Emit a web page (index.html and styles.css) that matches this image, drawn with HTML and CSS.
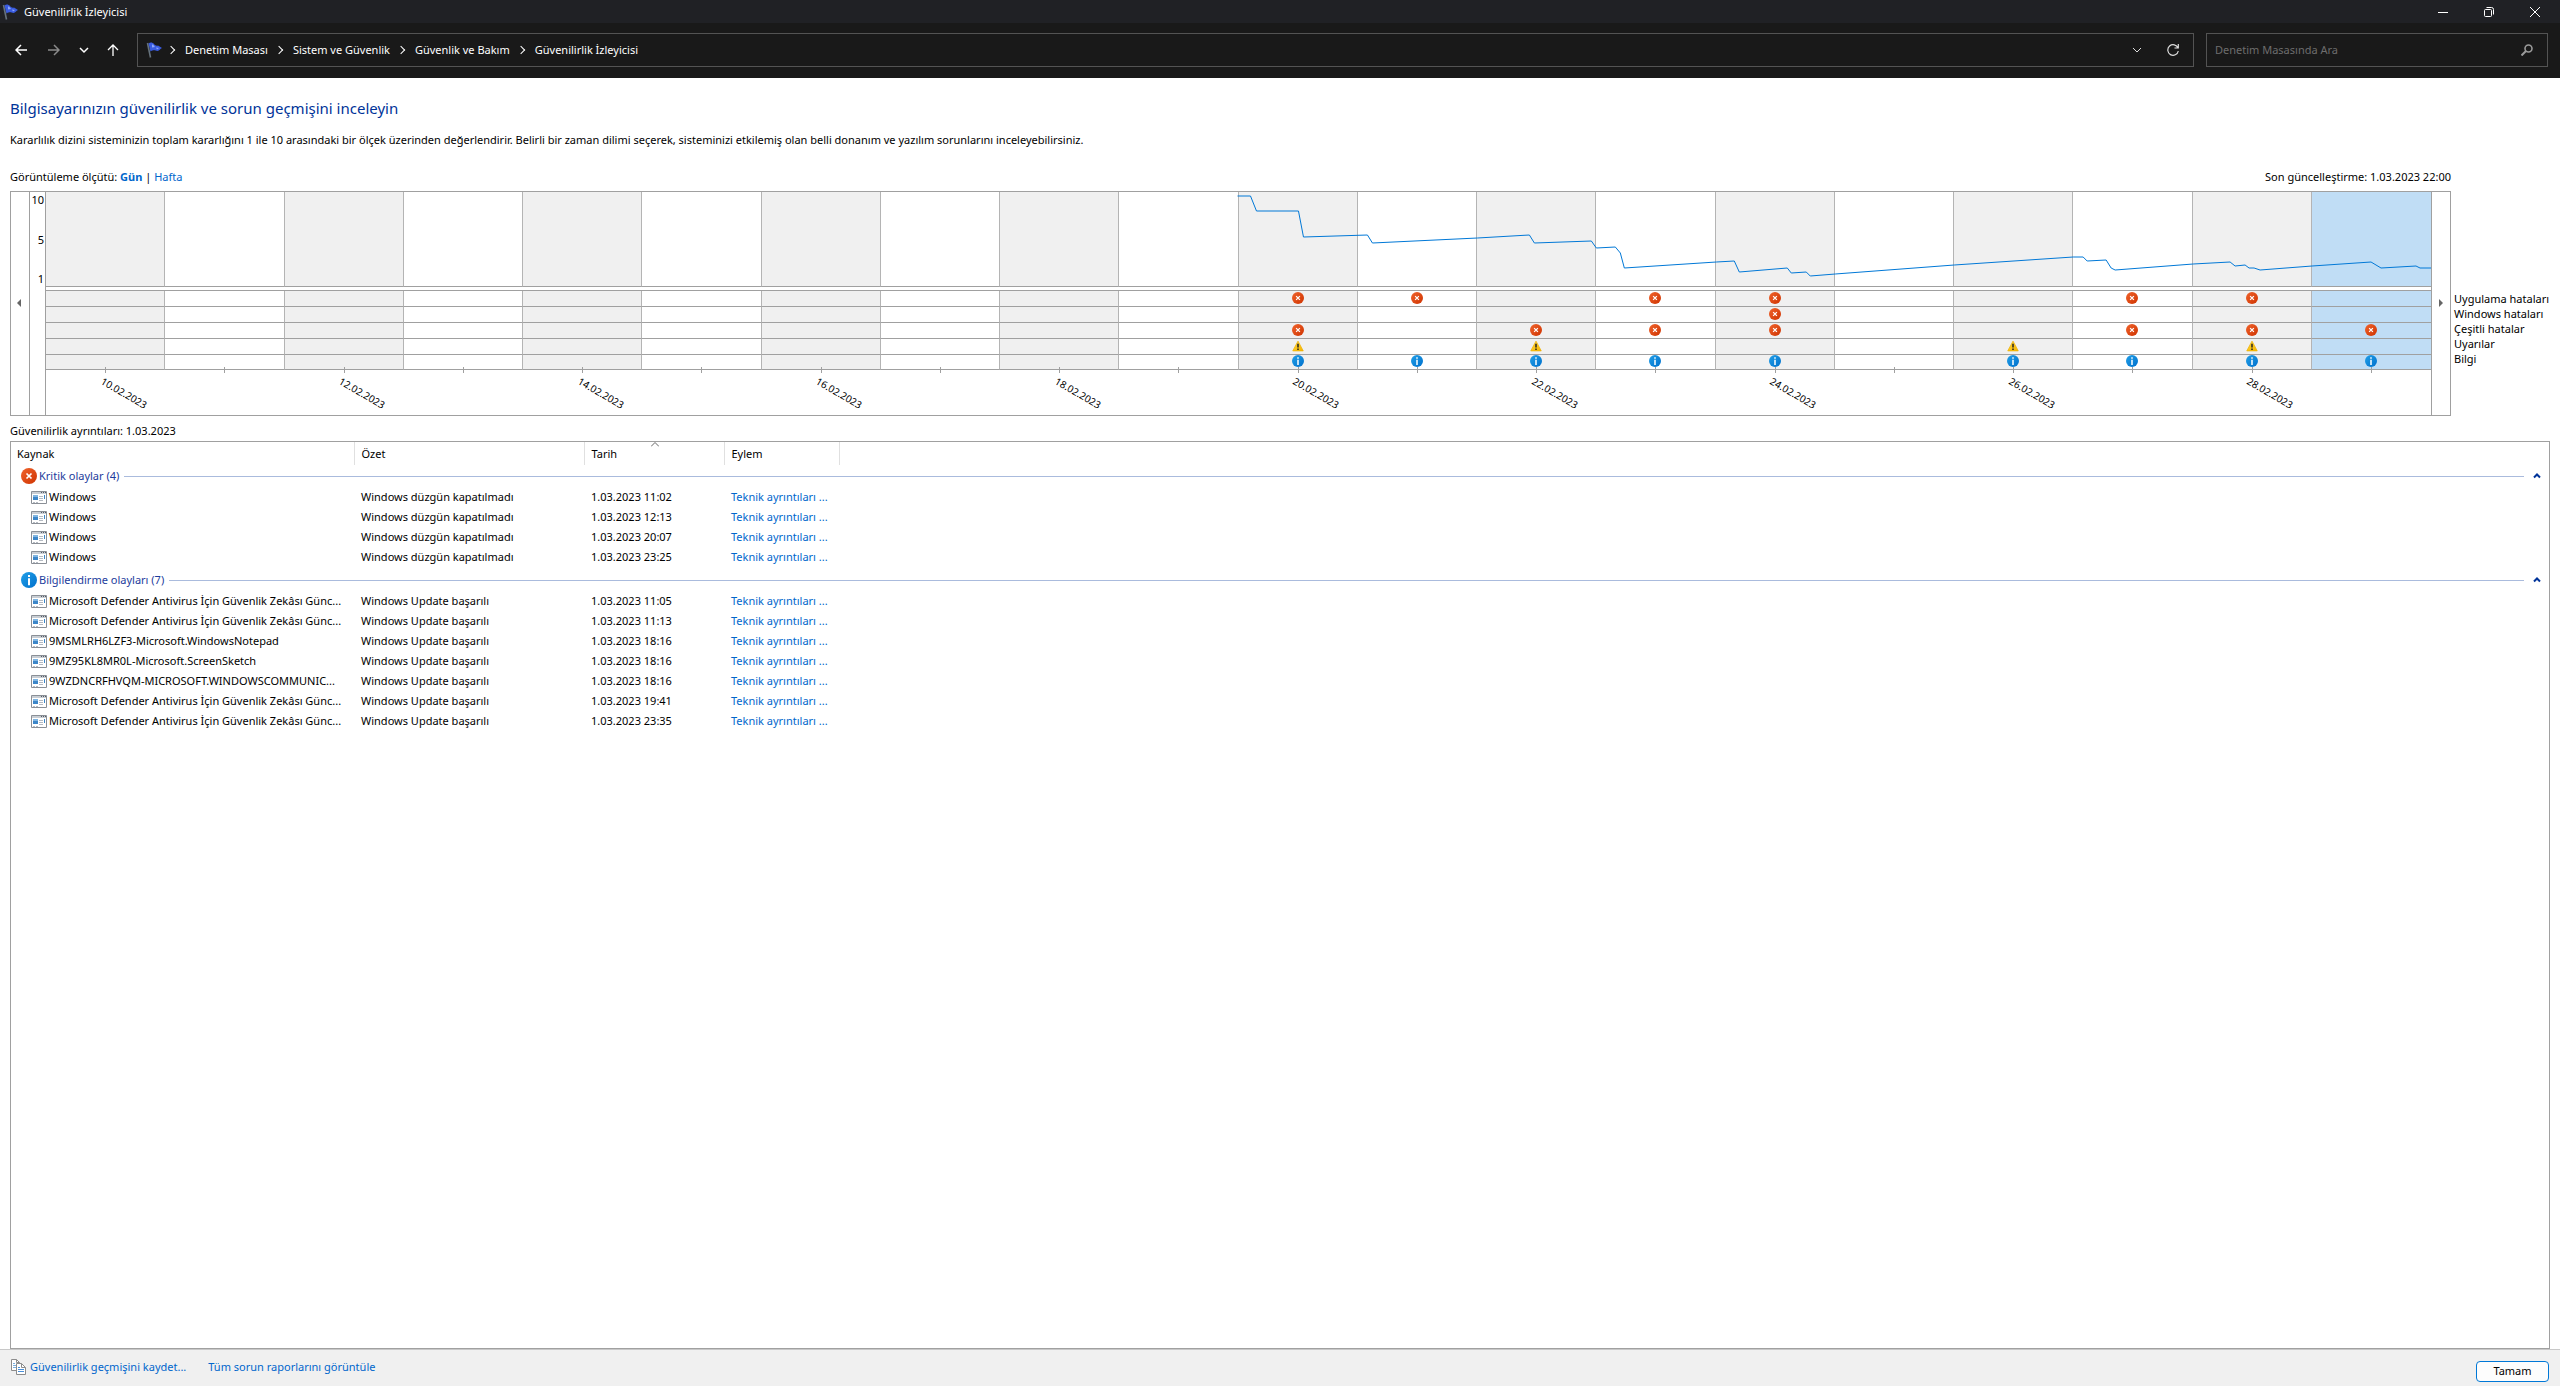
FILE: index.html
```html
<!DOCTYPE html>
<html lang="tr">
<head>
    <meta charset="UTF-8">
    <meta name="viewport" content="width=device-width, initial-scale=1.0">
    <title>Güvenilirlik İzleyicisi</title>
    <link rel="stylesheet" href="styles.css">
</head>
<body>
    <!-- Shared icons -->
    <svg class="sprite" width="0" height="0">
        <defs>
            <linearGradient id="red" x1="0" y1="0" x2="1" y2="1">
                <stop offset="0" stop-color="#f0642d"/>
                <stop offset="1" stop-color="#cf3300"/>
            </linearGradient>
            <linearGradient id="blue" x1="0" y1="0" x2="1" y2="1">
                <stop offset="0" stop-color="#22a0e8"/>
                <stop offset="1" stop-color="#0070cc"/>
            </linearGradient>
            <linearGradient id="yellow" x1="0" y1="0" x2="1" y2="1">
                <stop offset="0" stop-color="#ffd83a"/>
                <stop offset="1" stop-color="#f5b400"/>
            </linearGradient>
        </defs>
        <symbol id="error" viewBox="0 0 16 16">
            <circle cx="8" cy="8" r="8" fill="url(#red)"/>
            <path d="M5.500 5.500l5 5M10.500 5.500l-5 5" stroke="#fff" stroke-width="1.700"/>
        </symbol>
        <symbol id="info" viewBox="0 0 16 16">
            <circle cx="8" cy="8" r="8" fill="url(#blue)"/>
            <path d="M8 3v2M8 6.300v7" stroke="#fff" stroke-width="2"/>
        </symbol>
        <symbol id="warning" viewBox="0 0 16 16">
            <path d="M8 1.500L15 14.500H1z" fill="url(#yellow)" stroke="#efb000" stroke-linejoin="round"/>
            <path d="M8 5v5M8 11.300v2" stroke="#222" stroke-width="2"/>
        </symbol>
        <symbol id="flag" viewBox="0 0 16 16">
            <path d="M1.500 1l3 14.500" stroke="#66727c" stroke-width="1.600"/>
            <path d="M2.500 1.500c2-1.500 4-1 5.500.5 1 1.500 2.500 2 4 1.500l4 2.500c-2 .5-2.500 3-4.500 3-2.500 0-3-1.800-7 .5z" fill="#3a5ce0"/>
            <path d="M6 2.500c1.500-.5 2 1.500 3 2.500l-3 .5zM10 5.500l3 .5-2 1.500z" fill="#8ea6f8"/>
        </symbol>
        <symbol id="program" viewBox="0 0 16 13">
            <path d="M.5.500h15v12H.5z" fill="#fff" stroke="#8a8f96"/>
            <path d="M1 1h14v2H1z" fill="#c9ced4"/>
            <path d="M10 1.500h1M12 1.500h1M14 1.500h1" stroke="#555b63"/>
            <path d="M2 4h5v5H2z" fill="#3c86c8"/>
            <path d="M2 4h5v2H2z" fill="#7fb4e0"/>
            <path d="M8 5.500h4M8 7.500h4M8 9.500h4M2 11.500h2M5 11.500h2" stroke="#b4bac2"/>
            <path d="M13.500 4v4" stroke="#3c86c8"/>
        </symbol>
        <symbol id="up" viewBox="0 0 8 6">
            <path d="M1 4.500l3-3 3 3" fill="none" stroke="#003399" stroke-width="2"/>
        </symbol>
    </svg>

    <header class="titlebar">
        <svg class="icon" width="16" height="16"><use href="#flag"/></svg>
        <span class="title">Güvenilirlik İzleyicisi</span>
        <div class="window-buttons">
            <button type="button"><svg width="10" height="10"><path d="M0 5.500h10" stroke="#fff"/></svg></button>
            <button type="button"><svg width="10" height="10" fill="none" stroke="#fff"><rect x=".5" y="2.500" width="7" height="7" rx="1"/><path d="M2.500.5h5a2 2 0 0 1 2 2v5"/></svg></button>
            <button type="button"><svg width="10" height="10"><path d="M0 0l10 10M10 0L0 10" stroke="#fff"/></svg></button>
        </div>
    </header>

    <nav class="navbar">
        <div class="nav-buttons">
            <button type="button"><svg width="12" height="12"><path d="M12 6H1M6 1L1 6l5 5" stroke="#fff" stroke-width="1.500" fill="none"/></svg></button>
            <button type="button" disabled><svg width="12" height="12"><path d="M0 6h11M6 1l5 5-5 5" stroke="#8a8a8a" stroke-width="1.500" fill="none"/></svg></button>
            <button type="button"><svg width="12" height="12"><path d="M2 4l4 4 4-4" stroke="#fff" stroke-width="1.500" fill="none"/></svg></button>
            <button type="button"><svg width="12" height="12"><path d="M6 12V1M1 6l5-5 5 5" stroke="#fff" stroke-width="1.300" fill="none"/></svg></button>
        </div>
        <div class="address">
            <svg class="icon" width="16" height="16"><use href="#flag"/></svg>
            <ol class="breadcrumb">
                <li><a href="#">Denetim Masası</a></li>
                <li><a href="#">Sistem ve Güvenlik</a></li>
                <li><a href="#">Güvenlik ve Bakım</a></li>
                <li><a href="#">Güvenilirlik İzleyicisi</a></li>
            </ol>
            <button type="button"><svg width="12" height="12"><path d="M2 4l4 4 4-4" stroke="#ddd" fill="none"/></svg></button>
            <button type="button"><svg width="12" height="12" fill="none" stroke="#ddd" stroke-width="1.200"><path d="M11 4a5.300 5.300 0 1 0 .3 3M11.300 0v4H7.500"/></svg></button>
        </div>
        <div class="search">
            <input type="search" placeholder="Denetim Masasında Ara" aria-label="Denetim Masasında Ara">
            <svg width="12" height="12" fill="none" stroke="#9a9a9a"><circle cx="7.500" cy="4.500" r="3.500" stroke-width="1.600"/><path d="M5 7L.5 11.500" stroke-width="2"/></svg>
        </div>
    </nav>

    <main>
        <h1>Bilgisayarınızın güvenilirlik ve sorun geçmişini inceleyin</h1>
        <p class="intro">Kararlılık dizini sisteminizin toplam kararlığını 1 ile 10 arasındaki bir ölçek üzerinden değerlendirir. Belirli bir zaman dilimi seçerek, sisteminizi etkilemiş olan belli donanım ve yazılım sorunlarını inceleyebilirsiniz.</p>

        <div class="chart-head">
            <p>Görüntüleme ölçütü: <a href="#" class="current">Gün</a> | <a href="#">Hafta</a></p>
            <p>Son güncelleştirme: 1.03.2023 22:00</p>
        </div>

        <section class="chart-area">
            <div class="chart">
                <button type="button" class="scroll"><svg width="4" height="8"><path d="M4 0v8L0 4z" fill="#666"/></svg></button>
                <div class="axis"><span>10</span><span>5</span><span>1</span></div>
                <div class="plot">
                    <div class="days" id="days"></div>
                    <svg class="line" viewBox="0 0 2386 94" preserveAspectRatio="none">
                        <polyline vector-effect="non-scaling-stroke" fill="none" stroke="#0078d7" points="1192,4 1205,4 1211,19 1253,19 1258,45 1322,43 1327,51 1432,46 1484,43 1489,51 1546,49 1551,56 1570,55 1575,61 1579,76 1671,70 1689,69 1694,80 1742,76 1746,81 1761,80 1765,84 1790,82 1909,73 2028,65 2038,65 2042,69 2061,68 2066,76 2070,78 2148,72 2185,70 2190,74 2200,73 2204,76 2209,76 2215,78 2267,74 2326,70 2336,76 2371,74 2375,76 2386,76"/>
                    </svg>
                </div>
                <button type="button" class="scroll right"><svg width="4" height="8"><path d="M0 0v8l4-4z" fill="#666"/></svg></button>
            </div>
            <ul class="legend">
                <li>Uygulama hataları</li>
                <li>Windows hataları</li>
                <li>Çeşitli hatalar</li>
                <li>Uyarılar</li>
                <li>Bilgi</li>
            </ul>
        </section>

        <p class="details-label">Güvenilirlik ayrıntıları: 1.03.2023</p>

        <div class="details">
            <table>
                <colgroup>
                    <col class="col-source">
                    <col class="col-summary">
                    <col class="col-date">
                    <col class="col-action">
                    <col>
                </colgroup>
                <thead>
                    <tr>
                        <th>Kaynak</th>
                        <th>Özet</th>
                        <th class="sorted">Tarih<svg width="8" height="5"><path d="M0 4.500l4-4 4 4" fill="none" stroke="#666"/></svg></th>
                        <th>Eylem</th>
                        <th></th>
                    </tr>
                </thead>
                <tbody>
                    <tr class="group">
                        <th colspan="5"><div><svg class="icon" width="16" height="16"><use href="#error"/></svg><span>Kritik olaylar (4)</span><button type="button"><svg width="8" height="6"><use href="#up"/></svg></button></div></th>
                    </tr>
                    <tr>
                        <td><svg width="16" height="13"><use href="#program"/></svg>Windows</td>
                        <td>Windows düzgün kapatılmadı</td>
                        <td>1.03.2023 11:02</td>
                        <td><a href="#">Teknik ayrıntıları ...</a></td>
                        <td></td>
                    </tr>
                    <tr>
                        <td><svg width="16" height="13"><use href="#program"/></svg>Windows</td>
                        <td>Windows düzgün kapatılmadı</td>
                        <td>1.03.2023 12:13</td>
                        <td><a href="#">Teknik ayrıntıları ...</a></td>
                        <td></td>
                    </tr>
                    <tr>
                        <td><svg width="16" height="13"><use href="#program"/></svg>Windows</td>
                        <td>Windows düzgün kapatılmadı</td>
                        <td>1.03.2023 20:07</td>
                        <td><a href="#">Teknik ayrıntıları ...</a></td>
                        <td></td>
                    </tr>
                    <tr>
                        <td><svg width="16" height="13"><use href="#program"/></svg>Windows</td>
                        <td>Windows düzgün kapatılmadı</td>
                        <td>1.03.2023 23:25</td>
                        <td><a href="#">Teknik ayrıntıları ...</a></td>
                        <td></td>
                    </tr>
                </tbody>
                <tbody>
                    <tr class="group">
                        <th colspan="5"><div><svg class="icon" width="16" height="16"><use href="#info"/></svg><span>Bilgilendirme olayları (7)</span><button type="button"><svg width="8" height="6"><use href="#up"/></svg></button></div></th>
                    </tr>
                    <tr>
                        <td><svg width="16" height="13"><use href="#program"/></svg>Microsoft Defender Antivirus İçin Güvenlik Zekâsı Günc...</td>
                        <td>Windows Update başarılı</td>
                        <td>1.03.2023 11:05</td>
                        <td><a href="#">Teknik ayrıntıları ...</a></td>
                        <td></td>
                    </tr>
                    <tr>
                        <td><svg width="16" height="13"><use href="#program"/></svg>Microsoft Defender Antivirus İçin Güvenlik Zekâsı Günc...</td>
                        <td>Windows Update başarılı</td>
                        <td>1.03.2023 11:13</td>
                        <td><a href="#">Teknik ayrıntıları ...</a></td>
                        <td></td>
                    </tr>
                    <tr>
                        <td><svg width="16" height="13"><use href="#program"/></svg>9MSMLRH6LZF3-Microsoft.WindowsNotepad</td>
                        <td>Windows Update başarılı</td>
                        <td>1.03.2023 18:16</td>
                        <td><a href="#">Teknik ayrıntıları ...</a></td>
                        <td></td>
                    </tr>
                    <tr>
                        <td><svg width="16" height="13"><use href="#program"/></svg>9MZ95KL8MR0L-Microsoft.ScreenSketch</td>
                        <td>Windows Update başarılı</td>
                        <td>1.03.2023 18:16</td>
                        <td><a href="#">Teknik ayrıntıları ...</a></td>
                        <td></td>
                    </tr>
                    <tr>
                        <td><svg width="16" height="13"><use href="#program"/></svg>9WZDNCRFHVQM-MICROSOFT.WINDOWSCOMMUNIC...</td>
                        <td>Windows Update başarılı</td>
                        <td>1.03.2023 18:16</td>
                        <td><a href="#">Teknik ayrıntıları ...</a></td>
                        <td></td>
                    </tr>
                    <tr>
                        <td><svg width="16" height="13"><use href="#program"/></svg>Microsoft Defender Antivirus İçin Güvenlik Zekâsı Günc...</td>
                        <td>Windows Update başarılı</td>
                        <td>1.03.2023 19:41</td>
                        <td><a href="#">Teknik ayrıntıları ...</a></td>
                        <td></td>
                    </tr>
                    <tr>
                        <td><svg width="16" height="13"><use href="#program"/></svg>Microsoft Defender Antivirus İçin Güvenlik Zekâsı Günc...</td>
                        <td>Windows Update başarılı</td>
                        <td>1.03.2023 23:35</td>
                        <td><a href="#">Teknik ayrıntıları ...</a></td>
                        <td></td>
                    </tr>
                </tbody>
            </table>
        </div>
    </main>

    <footer>
        <svg width="15" height="16" fill="#fff" stroke="#8c8c8c"><path d="M.5.500h5l3 3v8h-8z"/><path d="M5.500.5v3h3" fill="none"/><path d="M2 4.500h2M2 6.500h3M2 8.500h3" stroke="#7ab0e0"/><path d="M5.500 4.500h5l4 4v7h-9z"/><path d="M10.500 4.500v4h4" fill="none"/><path d="M7 8.500h2M7 10.500h6M7 12.500h6" stroke="#4a90d9"/></svg>
        <a href="#">Güvenilirlik geçmişini kaydet...</a>
        <a href="#">Tüm sorun raporlarını görüntüle</a>
        <button type="button" class="ok">Tamam</button>
    </footer>

    <script src="script.js"></script>
</body>
</html>
```
FILE: styles.css
```css
* {
    box-sizing: border-box;
}
body {
    margin: 0;
    min-height: 100vh;
    display: flex;
    flex-direction: column;
    background: #fff;
    color: #000;
    font-family: "Noto Sans", "Open Sans", sans-serif;
    font-size: 11px;
    line-height: 16px;
}
h1, p, ol, ul {
    margin: 0;
    padding: 0;
    font-weight: normal;
}
ol, ul {
    list-style: none;
}
a {
    color: #0066cc;
    text-decoration: none;
}
button {
    padding: 0;
    border: 0;
    background: none;
    color: inherit;
    font: inherit;
}
svg {
    flex: none;
}
.sprite {
    position: absolute;
}

/* window frame */
.titlebar {
    display: flex;
    align-items: center;
    height: 23px;
    padding-left: 2px;
    background: #202125;
    color: #fff;
}
.title {
    margin-left: 6px;
}
.window-buttons {
    display: flex;
    margin-left: auto;
    padding-right: 2px;
}
.window-buttons button {
    width: 46px;
    height: 20px;
    display: flex;
    align-items: center;
    justify-content: center;
}
.navbar {
    display: flex;
    height: 55px;
    padding: 10px 12px 11px 0;
    background: #191919;
    color: #fff;
}
.nav-buttons {
    display: flex;
    align-items: center;
    width: 137px;
    padding-left: 15px;
}
.nav-buttons button {
    display: flex;
    width: 35px;
}
.nav-buttons button:nth-child(n+2) {
    width: 31px;
}
.address,
.search {
    display: flex;
    align-items: center;
    border: 1px solid #535353;
}
.address {
    flex: 1;
    padding-left: 8px;
}
.address button {
    width: 36px;
    display: flex;
    justify-content: center;
}
.address button:last-child {
    margin-right: 2px;
}
.breadcrumb {
    display: flex;
    flex: 1;
}
.breadcrumb li {
    display: flex;
    align-items: center;
}
.breadcrumb li::before {
    content: "";
    width: 5px;
    height: 5px;
    margin: 0 11px 0 6px;
    border-top: 1px solid #fff;
    border-right: 1px solid #fff;
    transform: rotate(45deg);
}
.breadcrumb li + li::before {
    margin-left: 8px;
}
.breadcrumb a {
    color: #fff;
}
.search {
    width: 342px;
    margin-left: 12px;
    padding: 0 14px 0 8px;
}
.search input {
    flex: 1;
    padding: 0;
    border: 0;
    outline: 0;
    background: none;
    color: #fff;
    font: inherit;
}
.search input::placeholder {
    color: #6d6d6d;
}

main {
    flex: 1;
    display: flex;
    flex-direction: column;
    padding: 19px 10px 0;
}
h1 {
    color: #003399;
    font-size: 15px;
    line-height: 22px;
}
.intro {
    margin-top: 13px;
}
.chart-head {
    display: flex;
    justify-content: space-between;
    margin: 21px 99px 6px 0;
}
.chart-head .current {
    font-weight: bold;
}

/* chart */
.chart-area {
    display: flex;
    margin-right: -10px;
}
.chart {
    flex: 1;
    display: flex;
    height: 225px;
    border: 1px solid #a0a0a0;
}
.scroll {
    width: 19px;
    display: flex;
    align-items: center;
    justify-content: center;
    padding: 0 2px 2px 0;
    border-right: 1px solid #a0a0a0;
}
.scroll.right {
    padding-right: 0;
    border-right: 0;
    border-left: 1px solid #a0a0a0;
}
.axis {
    display: flex;
    flex-direction: column;
    justify-content: space-between;
    width: 15px;
    padding: 0 1px 128px 0;
    text-align: right;
}
.plot {
    position: relative;
    flex: 1;
    border-left: 1px solid #a0a0a0;
}
.days {
    display: grid;
    grid-template-columns: repeat(20, 1fr);
}
.day {
    display: flex;
    flex-direction: column;
    align-items: stretch;
}
.graph {
    height: 95px;
    border-bottom: 1px solid #a0a0a0;
}
.marks {
    display: grid;
    grid-template-rows: repeat(4, 16px) 15px;
    margin-top: 3px;
    border-top: 1px solid #a0a0a0;
}
.mark {
    display: flex;
    align-items: center;
    justify-content: center;
    padding-bottom: 2px;
    border-bottom: 1px solid #a0a0a0;
}
.graph,
.mark {
    border-right: 1px solid #b4b4b4;
}
.day:nth-child(odd) .graph,
.day:nth-child(odd) .mark {
    background: #f0f0f0;
}
.day:last-child .graph,
.day:last-child .mark {
    border-right: 0;
}
.day[aria-pressed="true"] .graph,
.day[aria-pressed="true"] .mark {
    background: #c0ddf5;
}
.tick {
    align-self: center;
    width: 1px;
    height: 6px;
    margin-top: -3px;
    background: #a0a0a0;
}
.date {
    width: 4px;
    margin: 1px 50% 0 auto;
    font-size: 10px;
    line-height: 12px;
    white-space: nowrap;
    transform: rotate(30deg);
    transform-origin: 0 50%;
}
.line {
    position: absolute;
    top: 0;
    left: 0;
    width: 100%;
    height: 94px;
    pointer-events: none;
}
.legend {
    width: 109px;
    padding: 100px 0 0 3px;
    line-height: 15px;
    white-space: nowrap;
}

/* details list */
.details-label {
    margin: 7px 0 2px;
}
.details {
    flex: 1;
    border: 1px solid #a0a0a0;
}
table {
    width: 100%;
    table-layout: fixed;
    border-collapse: collapse;
}
.col-source {
    width: 343px;
}
.col-summary {
    width: 230px;
}
.col-date {
    width: 140px;
}
.col-action {
    width: 115px;
}
th, td {
    height: 20px;
    padding: 0 0 0 7px;
    font-weight: normal;
    text-align: left;
    white-space: nowrap;
}
thead th {
    height: 23px;
    border-right: 1px solid #e0e0e0;
}
thead th:first-child {
    padding-left: 6px;
}
thead th:last-child {
    border-right: 0;
}
.sorted {
    position: relative;
}
.sorted svg {
    position: absolute;
    top: 0;
    left: calc(50% - 3px);
}
td:first-child {
    padding-left: 20px;
}
td svg {
    margin-right: 2px;
    vertical-align: -3px;
}
.group th {
    height: 22px;
    padding-left: 10px;
    color: #1c3c9c;
}
tbody + tbody .group th {
    height: 24px;
    padding-top: 2px;
}
.group div {
    display: flex;
    align-items: center;
}
.group span {
    display: flex;
    align-items: center;
    flex: 1;
    margin-left: 2px;
}
.group span::after {
    content: "";
    flex: 1;
    height: 1px;
    margin-left: 5px;
    background: #aabbdd;
}
.group button {
    display: flex;
    padding: 0 8px 0 9px;
}

footer {
    display: flex;
    align-items: center;
    height: 37px;
    padding: 0 11px 2px;
    border-top: 1px solid #c8c8c8;
    background: #f0f0f0;
}
footer a {
    margin: 0 18px 0 4px;
}
.ok {
    width: 73px;
    height: 21px;
    margin: 8px 0 0 auto;
    border: 1px solid #0078d7;
    border-radius: 4px;
    background: #fdfdfd;
}
```
FILE: script.js
```js
const markRows = ['app', 'windows', 'misc', 'warning', 'info'];
const markIcons = { app: 'error', windows: 'error', misc: 'error', warning: 'warning', info: 'info' };

const days = [
    { date: '10.02.2023', marks: [] },
    { date: '11.02.2023', marks: [] },
    { date: '12.02.2023', marks: [] },
    { date: '13.02.2023', marks: [] },
    { date: '14.02.2023', marks: [] },
    { date: '15.02.2023', marks: [] },
    { date: '16.02.2023', marks: [] },
    { date: '17.02.2023', marks: [] },
    { date: '18.02.2023', marks: [] },
    { date: '19.02.2023', marks: [] },
    { date: '20.02.2023', marks: ['app', 'misc', 'warning', 'info'] },
    { date: '21.02.2023', marks: ['app', 'info'] },
    { date: '22.02.2023', marks: ['misc', 'warning', 'info'] },
    { date: '23.02.2023', marks: ['app', 'misc', 'info'] },
    { date: '24.02.2023', marks: ['app', 'windows', 'misc', 'info'] },
    { date: '25.02.2023', marks: [] },
    { date: '26.02.2023', marks: ['warning', 'info'] },
    { date: '27.02.2023', marks: ['app', 'misc', 'info'] },
    { date: '28.02.2023', marks: ['app', 'misc', 'warning', 'info'] },
    { date: '1.03.2023', marks: ['misc', 'info'] }
];

const daysElement = document.getElementById('days');

days.forEach((day, index) => {
    const button = document.createElement('button');
    button.type = 'button';
    button.className = 'day';
    button.setAttribute('aria-pressed', index === days.length - 1);

    const marks = markRows.map(row => {
        const icon = day.marks.includes(row)
            ? `<svg width="12" height="12"><use href="#${markIcons[row]}"/></svg>`
            : '';
        return `<span class="mark">${icon}</span>`;
    }).join('');

    // only every second day has its date under the axis
    const label = index % 2 === 0 ? `<span class="date">${day.date}</span>` : '';

    button.innerHTML = `<span class="graph"></span><span class="marks">${marks}</span><span class="tick"></span>${label}`;
    button.addEventListener('click', () => {
        daysElement.querySelector('[aria-pressed="true"]').setAttribute('aria-pressed', 'false');
        button.setAttribute('aria-pressed', 'true');
    });
    daysElement.appendChild(button);
});
```
